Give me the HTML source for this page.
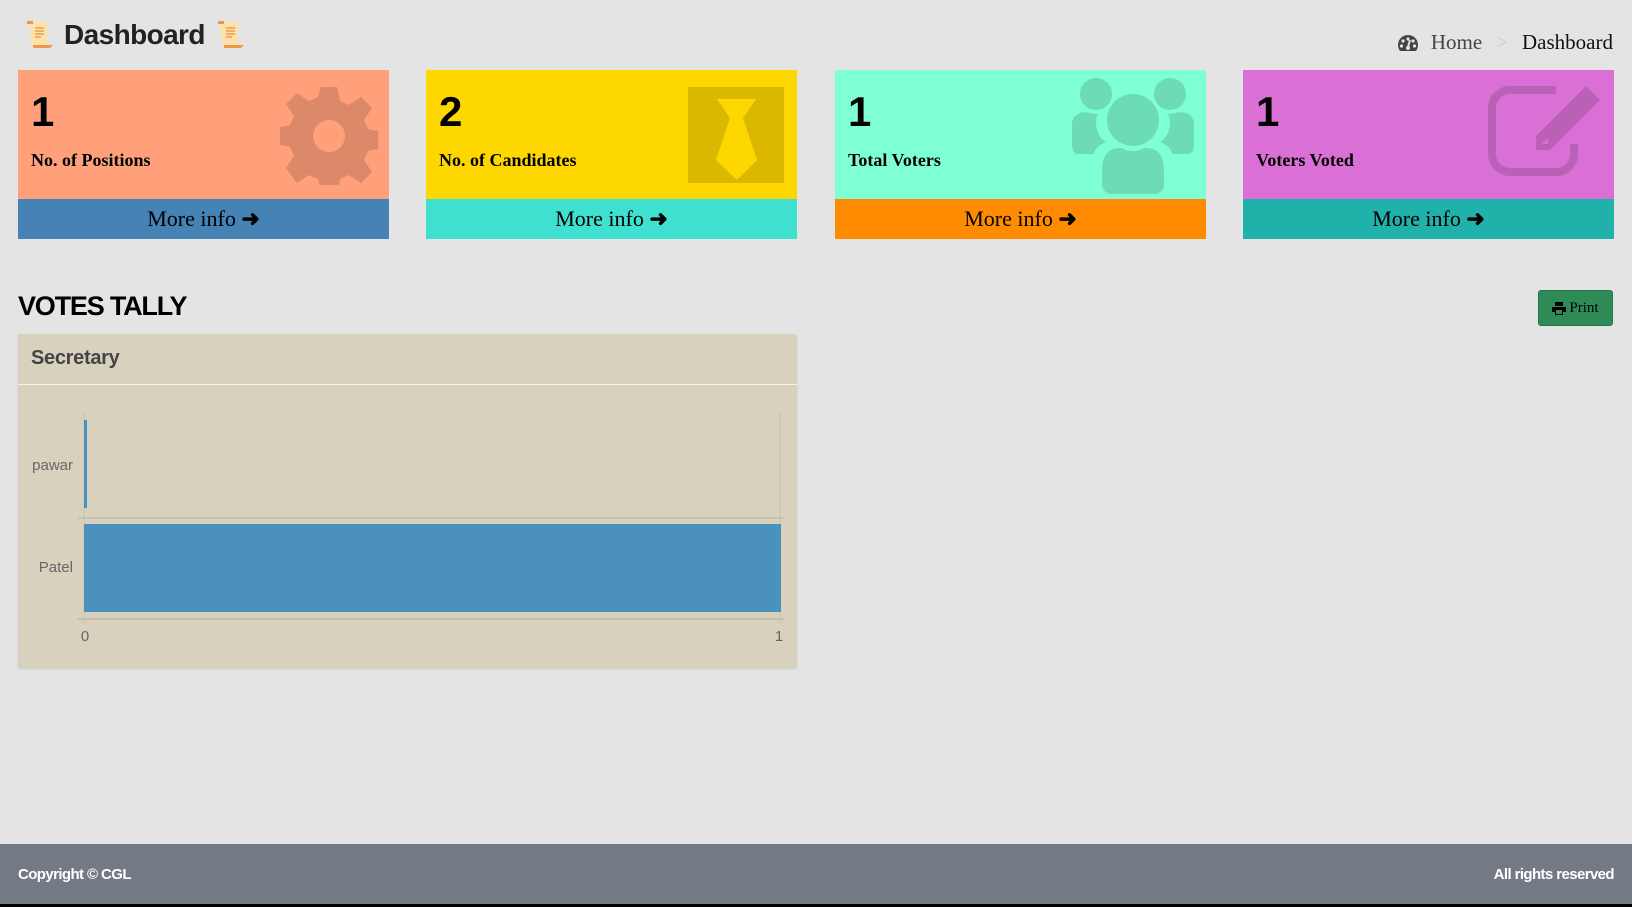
<!DOCTYPE html>
<html><head><meta charset="utf-8"><style>
*{box-sizing:border-box;margin:0;padding:0}
body{width:1632px;height:907px;background:#e4e4e4;font-family:"Liberation Serif",serif;position:relative;overflow:hidden}
.abs{position:absolute}
.title{left:24px;top:19px;font:bold 28px "Liberation Sans",sans-serif;color:#222;display:flex;align-items:center;gap:10px;letter-spacing:-0.6px}
.bc{right:19px;top:30px;font-size:21px;color:#444;display:flex;align-items:center}
.card{position:absolute;top:70px;width:371px;height:169px}
.card .body{height:129px;position:relative}
.card .num{position:absolute;left:13px;top:18px;font:bold 42px "Liberation Sans",sans-serif;color:#000}
.card .lbl{position:absolute;left:13px;top:80px;font-weight:bold;font-size:18px;color:#000}
.card .foot{height:40px;text-align:center;font-size:22px;line-height:40px;color:#000}
.card svg.ic{position:absolute}
</style></head><body>
<div class="abs title">
<svg width="30" height="32" viewBox="0 0 30 32"><path d="M5 3h18v24H8z" fill="#fde1a8"/><path d="M3 2h6v3H3z" fill="#e89a4a"/><path d="M9 26h20l-3 3H9z" fill="#e89a4a"/><path d="M11 9h9M11 12h9M11 15h9M11 18h6" stroke="#e8a055" stroke-width="1.5"/></svg>
<span>Dashboard</span>
<svg width="30" height="32" viewBox="0 0 30 32"><path d="M5 3h18v24H8z" fill="#fde1a8"/><path d="M3 2h6v3H3z" fill="#e89a4a"/><path d="M9 26h20l-3 3H9z" fill="#e89a4a"/><path d="M11 9h9M11 12h9M11 15h9M11 18h6" stroke="#e8a055" stroke-width="1.5"/></svg>
</div>
<div class="abs bc">
<svg width="22" height="18" viewBox="0 0 22 18"><path d="M11 1A10 10 0 0 0 1 11c0 2.5 1 4.5 2 6h16c1-1.5 2-3.5 2-6A10 10 0 0 0 11 1z" fill="#444"/><circle cx="11" cy="5" r="1.6" fill="#e4e4e4"/><circle cx="6" cy="7" r="1.6" fill="#e4e4e4"/><circle cx="16" cy="7" r="1.6" fill="#e4e4e4"/><circle cx="4.5" cy="12" r="1.6" fill="#e4e4e4"/><circle cx="17.5" cy="12" r="1.6" fill="#e4e4e4"/><path d="M13 6l-2 7" stroke="#e4e4e4" stroke-width="2"/><circle cx="11" cy="14" r="2" fill="#e4e4e4"/></svg>
<span style="margin-left:12px">Home</span><span style="color:#ccc;margin:0 14px">&gt;</span><span style="color:#111">Dashboard</span>
</div>

<div class="card" style="left:18px"><div class="body" style="background:#ffa07a">
<div class="num">1</div><div class="lbl">No. of Positions</div>
<svg class="ic" style="left:262px;top:17px" width="98" height="98" viewBox="0 0 98 98"><path fill="rgba(0,0,0,.14)" fill-rule="evenodd" d="M41 0h16l3 14 9 4 12-8 11 11-8 12 4 9 14 3v16l-14 3-4 9 8 12-11 11-12-8-9 4-3 14H41l-3-14-9-4-12 8L6 81l8-12-4-9-14-3V41l14-3 4-9-8-12L17 6l12 8 9-4zM49 33a16 16 0 1 0 0.01 0z"/></svg>
</div><div class="foot" style="background:#4682b4">More info <b>&#10140;</b></div></div>

<div class="card" style="left:426px"><div class="body" style="background:#ffd700">
<div class="num">2</div><div class="lbl">No. of Candidates</div>
<svg class="ic" style="left:262px;top:17px" width="96" height="96" viewBox="0 0 96 96"><path fill="rgba(0,0,0,.14)" fill-rule="evenodd" d="M0 0h96v96H0zM29 12h39l-13 19 14 42-20 20-21-20 14-42z"/></svg>
</div><div class="foot" style="background:#40e0d0">More info <b>&#10140;</b></div></div>

<div class="card" style="left:835px"><div class="body" style="background:#7fffd4">
<div class="num">1</div><div class="lbl">Total Voters</div>
<svg class="ic" style="left:237px;top:8px" width="122" height="116" viewBox="0 0 122 116" fill="rgba(0,0,0,.14)"><circle cx="24" cy="16" r="16"/><circle cx="98" cy="16" r="16"/><path d="M6 36c6-4 14 0 20 0 -4 8-2 22 8 28-10 4-12 10-12 12H6C2 76 0 72 0 66V46c0-4 2-8 6-10z"/><path d="M116 36c-6-4-14 0-20 0 4 8 2 22-8 28 10 4 12 10 12 12h16c4 0 6-4 6-10V46c0-4-2-8-6-10z"/><circle cx="61" cy="42" r="26"/><path d="M36 74c4-4 12-4 14-4 6 4 16 4 22 0 2 0 10 0 14 4 6 6 6 16 6 20v12c0 6-4 10-10 10H40c-6 0-10-4-10-10V94c0-4 0-14 6-20z"/></svg>
</div><div class="foot" style="background:#ff8c00">More info <b>&#10140;</b></div></div>

<div class="card" style="left:1243px"><div class="body" style="background:#da70d6">
<div class="num">1</div><div class="lbl">Voters Voted</div>
<svg class="ic" style="left:245px;top:16px" width="114" height="90" viewBox="0 0 114 90" fill="none" stroke="rgba(0,0,0,.14)"><path d="M68 4H22C12 4 4 12 4 22v46c0 10 8 18 18 18h46c10 0 18-8 18-18V58" stroke-width="8"/><path d="M98 0l14 14-50 50H48V50zM60 52l-6 6h6z" fill="rgba(0,0,0,.14)" stroke="none"/></svg>
</div><div class="foot" style="background:#20b2aa">More info <b>&#10140;</b></div></div>

<div class="abs" style="left:18px;top:291px;font:bold 27px 'Liberation Sans',sans-serif;color:#000;letter-spacing:-1.2px">VOTES TALLY</div>
<div class="abs" style="left:1538px;top:290px;width:75px;height:36px;background:#2e8b57;border:1px solid #1f7a45;border-radius:3px;font-size:15px;color:#000;display:flex;align-items:center;justify-content:center;gap:3px">
<svg width="14" height="13" viewBox="0 0 14 13"><path d="M3 0h8v4H3zM0 5h14v5h-3v3H3v-3H0z" fill="#000"/><path d="M4 8h6v4H4z" fill="#2e8b57"/></svg>Print</div>

<div class="abs" style="left:18px;top:334px;width:779px;height:334px;background:#d8d1bd;border-radius:2px;box-shadow:0 1px 2px rgba(0,0,0,.1)">
<div style="height:51px;border-bottom:1px solid #f5f2ea;padding:13px 13px;font:bold 20px 'Liberation Sans',sans-serif;color:#444;letter-spacing:-0.3px">Secretary</div>
</div>
<svg class="abs" style="left:18px;top:385px" width="779" height="270">
<line x1="66" y1="26" x2="66" y2="239" stroke="#c9c1ad"/>
<line x1="762" y1="26" x2="762" y2="239" stroke="#c9c1ad"/>
<line x1="60" y1="133" x2="766" y2="133" stroke="#c6bea9" stroke-width="1.5"/>
<line x1="60" y1="234" x2="766" y2="234" stroke="#c6bea9" stroke-width="2"/>
<rect x="66" y="35" width="3" height="88" fill="#4a91bd"/>
<rect x="66" y="139" width="697" height="88" fill="#4a91bd"/>
<g font-family="Liberation Sans,sans-serif" font-size="15" fill="#666">
<text x="55" y="85" text-anchor="end">pawar</text>
<text x="55" y="187" text-anchor="end">Patel</text>
<text x="67" y="256" text-anchor="middle">0</text>
<text x="761" y="256" text-anchor="middle">1</text></g>
</svg>

<div class="abs" style="left:0;top:844px;width:1632px;height:60px;background:#737a84;color:#fff;font:bold 15px 'Liberation Sans',sans-serif;letter-spacing:-0.6px">
<span class="abs" style="left:18px;top:22px">Copyright © CGL</span>
<span class="abs" style="right:18px;top:22px">All rights reserved</span></div>
<div class="abs" style="left:0;top:904px;width:1632px;height:3px;background:#000"></div>
</body></html>
